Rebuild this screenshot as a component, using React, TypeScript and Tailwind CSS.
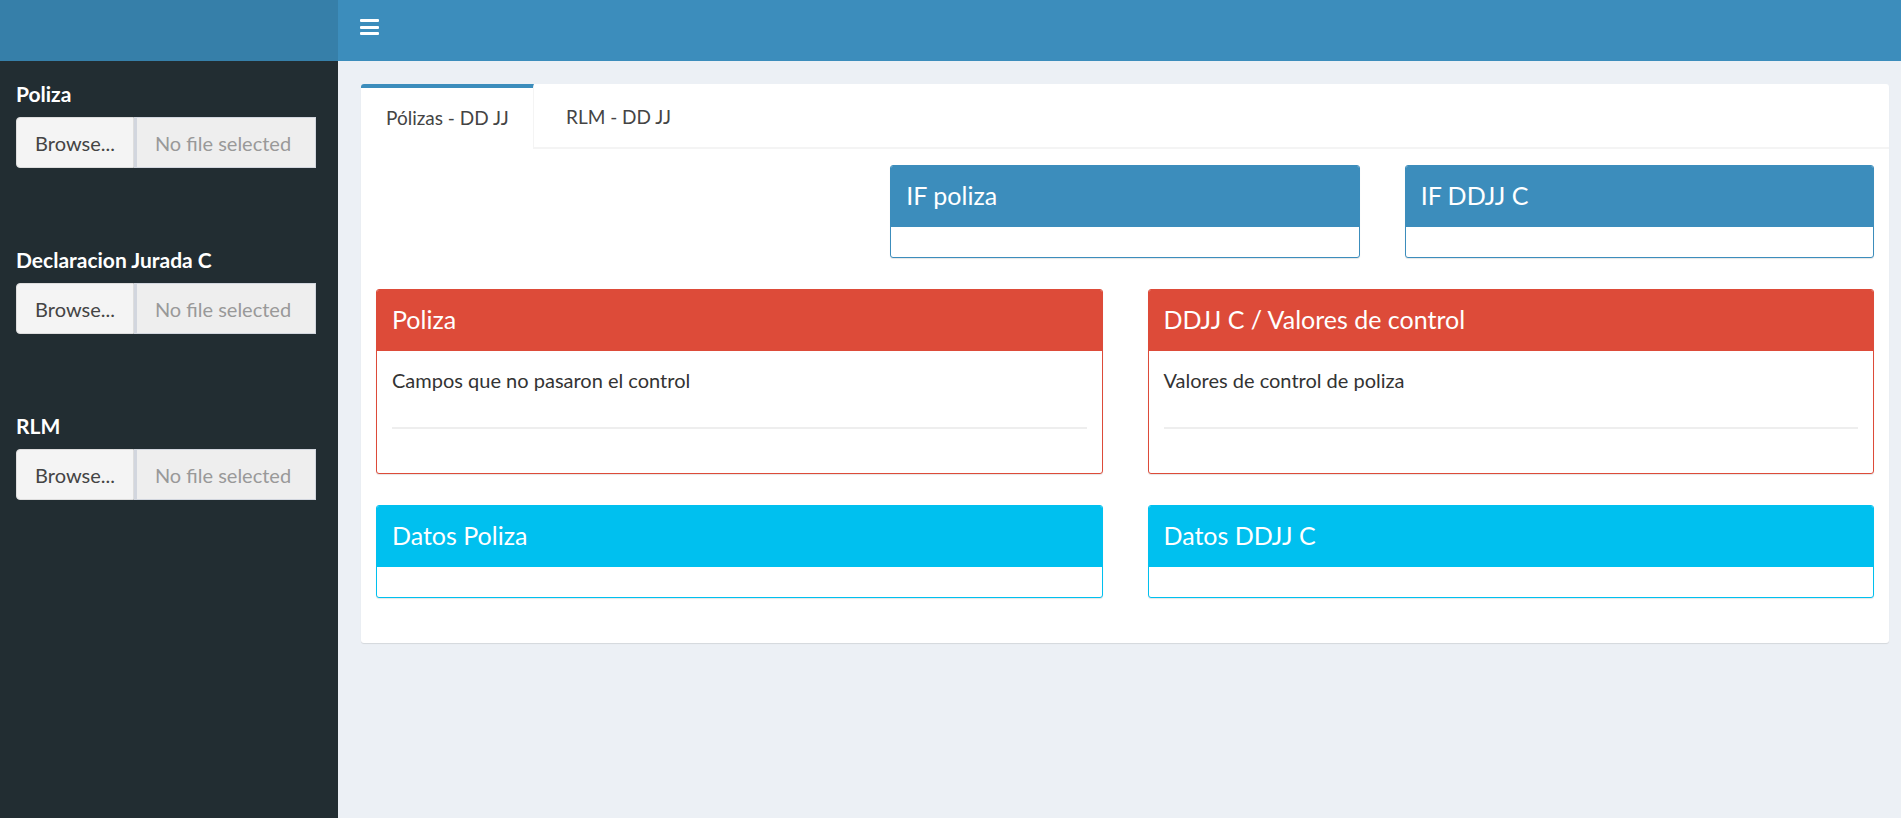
const font = { fontFamily: "Lato, 'Open Sans', sans-serif" };

const FileInput = ({ label }: { label: string }) => {
  return (
    <div className="mb-[80px]">
      <div className="text-[21px] leading-[24px] font-bold text-white mb-[11px]">{label}</div>
      <div className="flex h-[51px] w-[300px]">
        <div className="w-[118px] flex items-center justify-center bg-[#f4f4f4] border border-[#ddd] rounded-l-[4px] text-[20px] text-[#444]">
          Browse...
        </div>
        <div className="flex-1 flex items-center justify-center pr-[6px] bg-[#eee] border border-[#d2d6de] border-l-[3px] text-[20px] text-[#999]">
          No file selected
        </div>
      </div>
    </div>
  );
};

interface BoxProps {
  title: string;
  color: "primary" | "danger" | "info";
  children?: React.ReactNode;
}

const Box = ({ title, color, children }: BoxProps) => {
  const styles = {
    primary: { border: "border-[#3c8dbc]", head: "bg-[#3c8dbc]" },
    danger: { border: "border-[#dd4b39]", head: "bg-[#dd4b39]" },
    info: { border: "border-[#00c0ef]", head: "bg-[#00c0ef]" },
  }[color];

  return (
    <div className={`border ${styles.border} rounded-[3px] bg-white shadow-[0_1px_1px_rgba(0,0,0,0.1)] overflow-hidden`}>
      <div className={`${styles.head} h-[61px] flex items-center px-[15px]`}>
        <h3 className="text-[25px] text-white leading-none -mt-[2px]">{title}</h3>
      </div>
      {children ? children : <div className="h-[30px]" />}
    </div>
  );
};

const ControlBody = ({ text }: { text: string }) => {
  return (
    <div className="px-[15px] pt-[17px] h-[122px]">
      <p className="text-[20px] leading-[24px] text-[#333]">{text}</p>
      <hr className="mt-[35px] border-t-2 border-[#eee]" />
    </div>
  );
};

export default function App() {
  return (
    <div className="flex min-h-screen w-full" style={font}>
      {/* sidebar */}
      <aside className="w-[338px] flex flex-col shrink-0">
        <div className="h-[61px] bg-[#367fa9]" />
        <div className="flex-1 bg-[#222d32] pt-[21px] px-[16px]">
          <FileInput label="Poliza" />
          <FileInput label="Declaracion Jurada C" />
          <FileInput label="RLM" />
        </div>
      </aside>

      {/* main */}
      <div className="flex-1 flex flex-col">
        <header className="h-[61px] bg-[#3c8dbc] flex items-center px-[22px]">
          <svg width="19" height="16" viewBox="0 0 19 16" className="-mt-[7px]">
            <rect x="0" y="0" width="19" height="3" rx="1" fill="white" />
            <rect x="0" y="7" width="19" height="3" rx="1" fill="white" />
            <rect x="0" y="13" width="19" height="3" rx="1" fill="white" />
          </svg>
        </header>

        <main className="flex-1 bg-[#ecf0f5] pt-[23px] pl-[23px] pr-[12px]">
          <div className="bg-white rounded-[3px] shadow-[0_1px_1px_rgba(0,0,0,0.1)]">
            {/* tabs */}
            <div className="flex gap-[6px] border-b-2 border-[#f4f4f4] h-[65px]">
              <div className="w-[173px] border-t-4 border-[#3c8dbc] border-r border-r-[#f4f4f4] bg-white flex items-center pl-[25px] text-[19px] text-[#444] -mb-[2px] rounded-tl-[3px]">
                Pólizas - DD JJ
              </div>
              <div className="flex items-center pl-[26px] pr-[25px] text-[19px] text-[#444] pt-[4px]">RLM - DD JJ</div>
            </div>

            {/* tab content */}
            <div className="px-[15px] pt-[16px] pb-[45px] flex flex-col gap-[31px]">
              <div className="grid grid-cols-3 gap-x-[45px]">
                <div />
                <Box title="IF poliza" color="primary" />
                <Box title="IF DDJJ C" color="primary" />
              </div>

              <div className="grid grid-cols-2 gap-x-[45px]">
                <Box title="Poliza" color="danger">
                  <ControlBody text="Campos que no pasaron el control" />
                </Box>
                <Box title="DDJJ C / Valores de control" color="danger">
                  <ControlBody text="Valores de control de poliza" />
                </Box>
              </div>

              <div className="grid grid-cols-2 gap-x-[45px]">
                <Box title="Datos Poliza" color="info" />
                <Box title="Datos DDJJ C" color="info" />
              </div>
            </div>
          </div>
        </main>
      </div>
    </div>
  );
}
